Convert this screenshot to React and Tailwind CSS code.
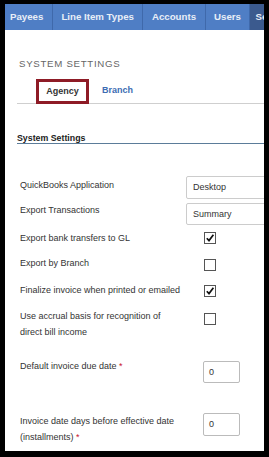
import React from "react";

const navItems = ["Payees", "Line Item Types", "Accounts", "Users"];

const Checkbox = ({ checked }) => (
  <span className="flex h-[12px] w-[12px] items-center justify-center border border-[#555] bg-white">
    {checked && (
      <svg width="10" height="10" viewBox="0 0 10 10">
        <path d="M1.8 5.2 L4 7.6 L8.4 1.8" fill="none" stroke="#111" strokeWidth="1.7" />
      </svg>
    )}
  </span>
);

const Required = () => <span className="text-[#c8102e]"> *</span>;

const App = () => {
  return (
    <div className="h-[457px] w-[269px] bg-black pb-[6px] pl-[5px] pr-[5px] pt-[4px] font-['Liberation_Sans',Arial,sans-serif]">
      <div className="h-full w-full overflow-hidden bg-white">
        {/* Top nav */}
        <div className="flex h-[26px] bg-[#4f7ec5]">
          <div className="-ml-[3.5px] flex">
            {navItems.map((item) => (
              <div
                key={item}
                className="flex items-center whitespace-nowrap border-r border-[#3f69ab] px-[8.5px] text-[9.7px] font-bold leading-none text-[#e8eef7]"
              >
                {item}
              </div>
            ))}
            <div className="flex items-center whitespace-nowrap bg-[#3b5a8e] px-[5px] text-[9.7px] font-bold leading-none text-[#e8eef7]">
              Settings
            </div>
          </div>
        </div>

        {/* Page title */}
        <div className="ml-[14px] mt-[29px] text-[9.7px] uppercase leading-none tracking-[0.7px] text-[#666]">
          System Settings
        </div>

        {/* Tabs */}
        <div className="ml-[12px] mt-[10px] flex items-end border-b border-[#cfcfcf] pl-[19px]">
          <div className="-mb-[1px] flex h-[25px] w-[53px] items-center justify-center border-[3px] border-[#8e1b26] text-[9px] font-bold leading-none text-[#333]">
            Agency
          </div>
          <div className="ml-[13px] flex h-[24px] items-center text-[9px] font-bold leading-none text-[#3d6cb3]">
            Branch
          </div>
        </div>

        {/* Section heading */}
        <div className="ml-[12px] mt-[30px] border-b border-[#5b7c99] text-[8.8px] font-bold leading-none text-[#222]">
          System Settings
        </div>

        {/* Rows */}
        <div className="ml-[15px] text-[9px] leading-[16px] text-[#333]">
          <div className="mt-[32px] flex">
            <div className="w-[166px] shrink-0 pt-[1px]">QuickBooks Application</div>
            <div className="flex h-[23px] w-[110px] shrink-0 items-center rounded-[2px] border border-[#ccc] pl-[6px]">
              Desktop
            </div>
          </div>

          <div className="mt-[3px] flex">
            <div className="w-[166px] shrink-0">Export Transactions</div>
            <div className="mt-[1px] flex h-[22px] w-[110px] shrink-0 items-center rounded-[2px] border border-[#ccc] pl-[6px]">
              Summary
            </div>
          </div>

          <div className="mt-[5px] flex">
            <div className="w-[184px] shrink-0 whitespace-nowrap">Export bank transfers to GL</div>
            <div className="mt-[2px]">
              <Checkbox checked />
            </div>
          </div>

          <div className="mt-[9px] flex">
            <div className="w-[184px] shrink-0 whitespace-nowrap">Export by Branch</div>
            <div className="mt-[4px]">
              <Checkbox />
            </div>
          </div>

          <div className="mt-[11px] flex">
            <div className="w-[184px] shrink-0 whitespace-nowrap">
              Finalize invoice when printed or emailed
            </div>
            <div className="mt-[3px]">
              <Checkbox checked />
            </div>
          </div>

          <div className="mt-[10px] flex">
            <div className="w-[184px] shrink-0 whitespace-nowrap">
              Use accrual basis for recognition of
              <br />
              direct bill income
            </div>
            <div className="mt-[5px]">
              <Checkbox />
            </div>
          </div>

          <div className="mt-[18px] flex">
            <div className="w-[183px] shrink-0 whitespace-nowrap">
              Default invoice due date
              <Required />
            </div>
            <div className="mt-[3px] flex h-[22px] w-[37px] items-center rounded-[2px] border border-[#bbb] pl-[5px]">
              0
            </div>
          </div>

          <div className="mt-[30px] flex">
            <div className="w-[183px] shrink-0 whitespace-nowrap">
              Invoice date days before effective date
              <br />
              (installments)
              <Required />
            </div>
            <div className="flex h-[23px] w-[37px] items-center rounded-[2px] border border-[#bbb] pl-[5px]">
              0
            </div>
          </div>
        </div>
      </div>
    </div>
  );
};

export default App;
